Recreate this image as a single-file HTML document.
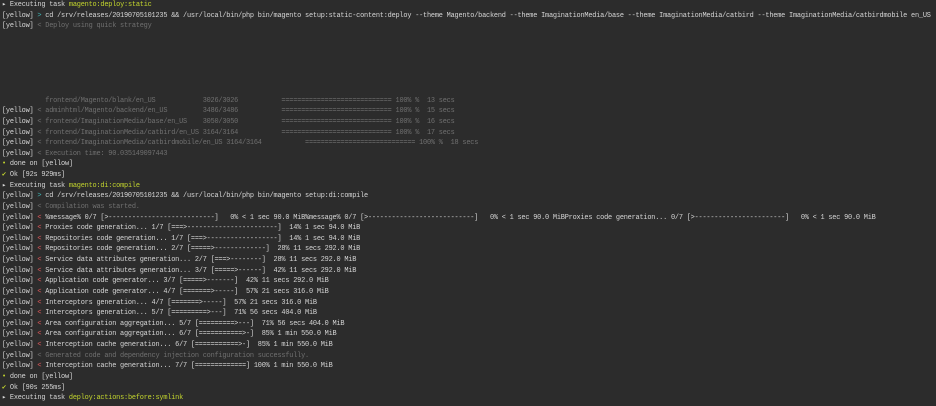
<!DOCTYPE html>
<html><head><meta charset="utf-8"><style>
html,body{margin:0;padding:0;background:#2c2c2c;width:936px;height:406px;overflow:hidden}
pre{margin:0;padding:0 0 0 2px;font-family:"Liberation Mono",monospace;font-size:6.9px;letter-spacing:-0.2px;line-height:10.63px;color:#d6d6d6;white-space:pre}
.y{color:#c3d52e}.d{color:#707070}.r{color:#e0585a}.t{color:#3fb3b3}.w{color:#d8d8d8}
</style></head><body><pre><span class="w">&#x25B8;</span> Executing task <span class="y">magento:deploy:static</span>
[yellow] <span class="t">&gt;</span> cd /srv/releases/20190705101235 &amp;&amp; /usr/local/bin/php bin/magento setup:static-content:deploy --theme Magento/backend --theme ImaginationMedia/base --theme ImaginationMedia/catbird --theme ImaginationMedia/catbirdmobile en_US
[yellow] <span class="d">&lt; Deploy using quick strategy</span>






<span class="d">           frontend/Magento/blank/en_US            3026/3026           ============================ 100% %  13 secs</span>
[yellow] <span class="d">&lt; adminhtml/Magento/backend/en_US         3486/3486           ============================ 100% %  15 secs</span>
[yellow] <span class="d">&lt; frontend/ImaginationMedia/base/en_US    3050/3050           ============================ 100% %  16 secs</span>
[yellow] <span class="d">&lt; frontend/ImaginationMedia/catbird/en_US 3164/3164           ============================ 100% %  17 secs</span>
[yellow] <span class="d">&lt; frontend/ImaginationMedia/catbirdmobile/en_US 3164/3164           ============================ 100% %  18 secs</span>
[yellow] <span class="d">&lt; Execution time: 90.035149097443</span>
<span class="y">&#x2022;</span> done on [yellow]
<span class="y">&#x2714;</span> Ok [92s 929ms]
<span class="w">&#x25B8;</span> Executing task <span class="y">magento:di:compile</span>
[yellow] <span class="t">&gt;</span> cd /srv/releases/20190705101235 &amp;&amp; /usr/local/bin/php bin/magento setup:di:compile
[yellow] <span class="d">&lt; Compilation was started.</span>
[yellow] <span class="r">&lt;</span> %message% 0/7 [&gt;---------------------------]   0% &lt; 1 sec 90.0 MiB%message% 0/7 [&gt;---------------------------]   0% &lt; 1 sec 90.0 MiBProxies code generation... 0/7 [&gt;-----------------------]   0% &lt; 1 sec 90.0 MiB
[yellow] <span class="r">&lt;</span> Proxies code generation... 1/7 [===&gt;-----------------------]  14% 1 sec 94.0 MiB
[yellow] <span class="r">&lt;</span> Repositories code generation... 1/7 [===&gt;------------------]  14% 1 sec 94.0 MiB
[yellow] <span class="r">&lt;</span> Repositories code generation... 2/7 [=====&gt;-------------]  28% 11 secs 292.0 MiB
[yellow] <span class="r">&lt;</span> Service data attributes generation... 2/7 [===&gt;--------]  28% 11 secs 292.0 MiB
[yellow] <span class="r">&lt;</span> Service data attributes generation... 3/7 [=====&gt;------]  42% 11 secs 292.0 MiB
[yellow] <span class="r">&lt;</span> Application code generator... 3/7 [=====&gt;-------]  42% 11 secs 292.0 MiB
[yellow] <span class="r">&lt;</span> Application code generator... 4/7 [=======&gt;-----]  57% 21 secs 316.0 MiB
[yellow] <span class="r">&lt;</span> Interceptors generation... 4/7 [=======&gt;-----]  57% 21 secs 316.0 MiB
[yellow] <span class="r">&lt;</span> Interceptors generation... 5/7 [=========&gt;---]  71% 56 secs 404.0 MiB
[yellow] <span class="r">&lt;</span> Area configuration aggregation... 5/7 [=========&gt;---]  71% 56 secs 404.0 MiB
[yellow] <span class="r">&lt;</span> Area configuration aggregation... 6/7 [===========&gt;-]  85% 1 min 550.0 MiB
[yellow] <span class="r">&lt;</span> Interception cache generation... 6/7 [===========&gt;-]  85% 1 min 550.0 MiB
[yellow] <span class="d">&lt; Generated code and dependency injection configuration successfully.</span>
[yellow] <span class="r">&lt;</span> Interception cache generation... 7/7 [=============] 100% 1 min 550.0 MiB
<span class="y">&#x2022;</span> done on [yellow]
<span class="y">&#x2714;</span> Ok [90s 255ms]
<span class="w">&#x25B8;</span> Executing task <span class="y">deploy:actions:before:symlink</span></pre></body></html>
